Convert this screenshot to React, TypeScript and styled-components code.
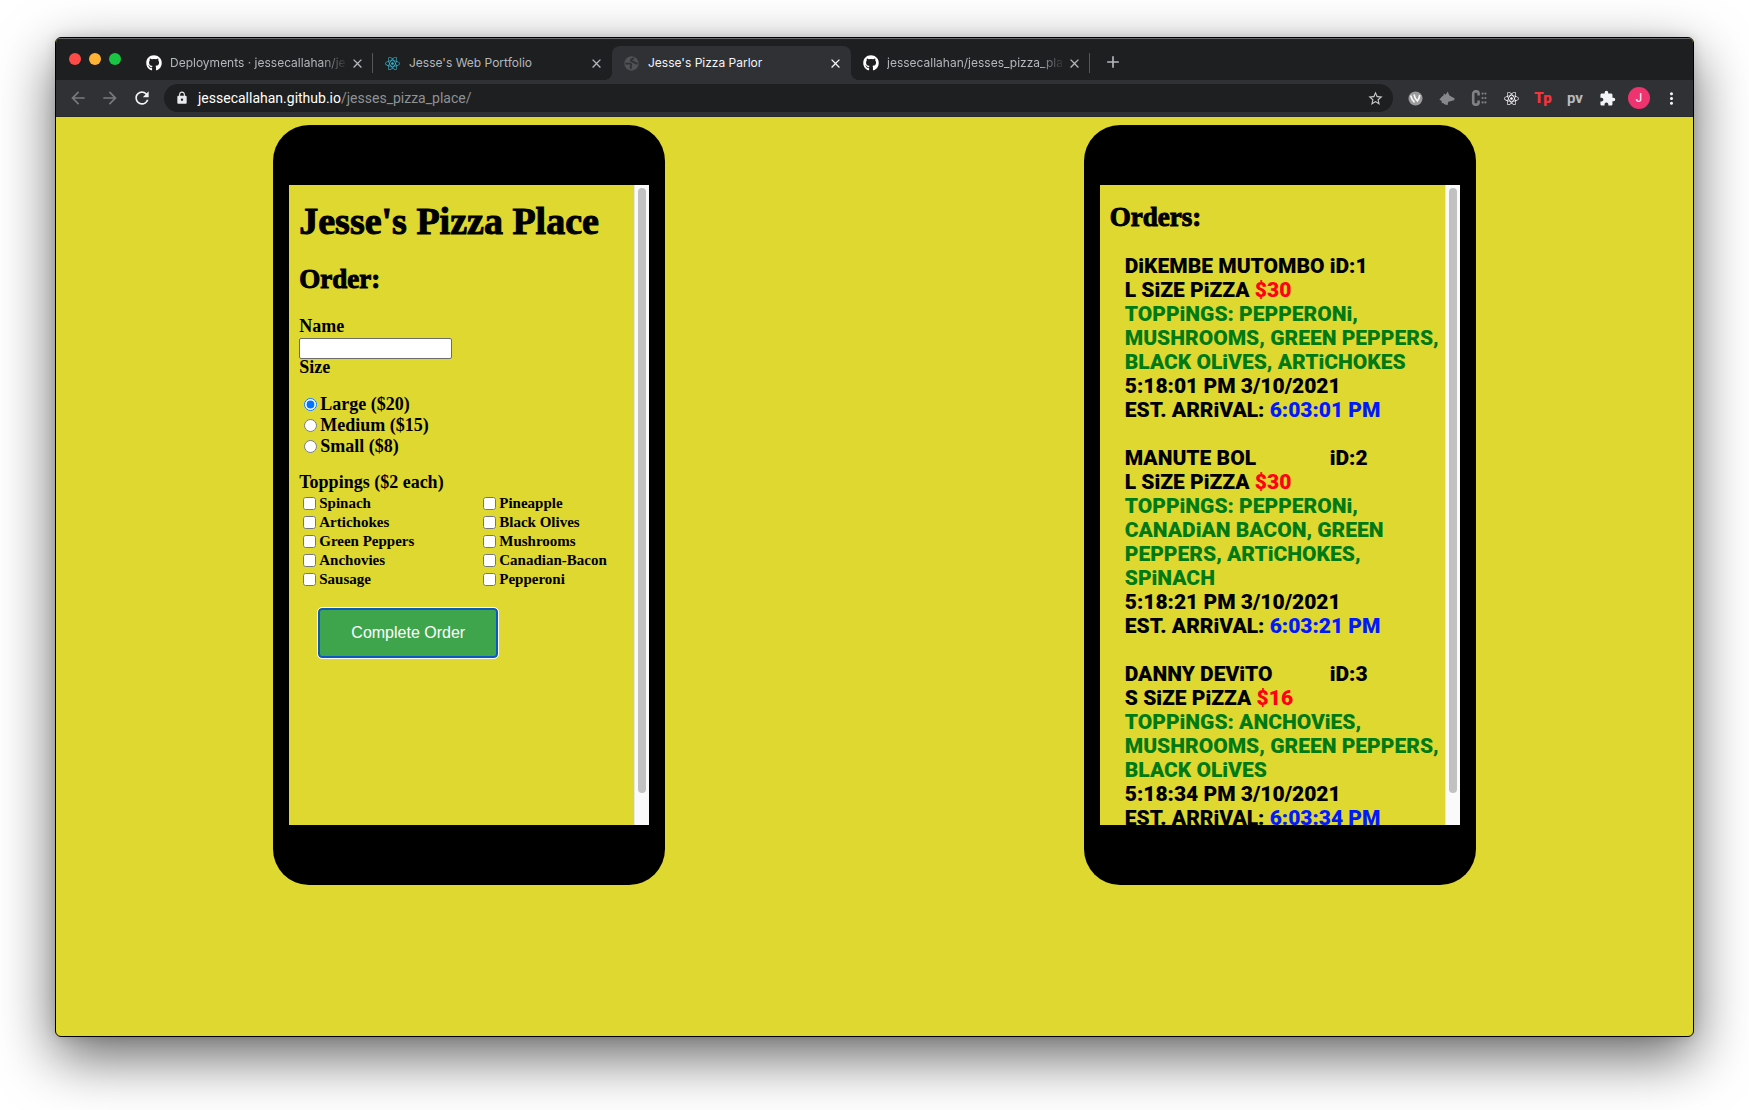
import React from "react";
import styled, { createGlobalStyle } from "styled-components";
import { FaGithub, FaReact } from "react-icons/fa";
import {
  MdAdd, MdArrowBack, MdArrowForward, MdClose, MdExtension, MdLock,
  MdMoreVert, MdRefresh, MdStarBorder,
} from "react-icons/md";

const mustard = "#ded830";
const display = `"Liberation Serif", "Times New Roman", serif`;
const ui = `Inter, Roboto, "Liberation Sans", sans-serif`;

const GlobalStyle = createGlobalStyle`
  *, *::before, *::after { box-sizing: border-box; }
  body { margin: 0; background: #fff; font-family: ${ui}; }
  #root { min-height: 100vh; display: flex; }
  button { font: inherit; }
`;

const Desktop = styled.div`
  flex: 1;
  min-height: 100vh;
  display: flex;
  padding: 37px 55px 73px;
  overflow: hidden;
`;

const BrowserWindow = styled.div`
  flex: 1;
  min-width: 0;
  display: flex;
  flex-direction: column;
  border: 1px solid #000;
  border-radius: 6px;
  overflow: hidden;
  background: ${mustard};
  box-shadow: 0 20px 56px rgba(0, 0, 0, 0.6), 0 0 12px rgba(0, 0, 0, 0.14);
`;

const TabStrip = styled.div`
  display: flex;
  height: 42px;
  padding-top: 7px;
  background: #1e1f21;
  border-top: 1px solid #6a6b6d;
`;

const WindowControls = styled.div`
  display: flex;
  gap: 8px;
  width: 78px;
  padding: 7px 0 0 13px;
`;

const Light = styled.button<{ $color: string }>`
  width: 12px;
  height: 12px;
  padding: 0;
  border: 0;
  border-radius: 50%;
  background: ${(p) => p.$color};
`;

const Tab = styled.div<{ $active?: boolean; $divided?: boolean }>`
  position: relative;
  display: flex;
  align-items: center;
  width: 239px;
  height: 34px;
  padding: 0 7px 0 12px;
  border-radius: 8px 8px 0 0;
  background: ${(p) => (p.$active ? "#303135" : "transparent")};
  color: ${(p) => (p.$active ? "#f4f5f6" : "#b4b7bb")};
  background-image: ${(p) => (p.$divided ? "linear-gradient(#55575a, #55575a)" : "none")};
  background-size: 1px 20px;
  background-position: right center;
  background-repeat: no-repeat;

  &::before,
  &::after {
    content: "";
    display: ${(p) => (p.$active ? "block" : "none")};
    position: absolute;
    bottom: 0;
    width: 8px;
    height: 8px;
  }
  &::before {
    right: 100%;
    background: radial-gradient(circle at 0 0, transparent 8px, #303135 8px);
  }
  &::after {
    left: 100%;
    background: radial-gradient(circle at 100% 0, transparent 8px, #303135 8px);
  }
`;

const Favicon = styled.span<{ $color: string }>`
  flex: none;
  display: flex;
  width: 24px;
  color: ${(p) => p.$color};
`;

const TabTitle = styled.span<{ $fade?: boolean }>`
  flex: 1;
  min-width: 0;
  overflow: hidden;
  white-space: nowrap;
  font-size: 12px;
  line-height: 16px;
  mask-image: ${(p) => (p.$fade ? "linear-gradient(90deg, #000 85%, transparent)" : "none")};
`;

const IconButton = styled.button<{ $size?: number; $color?: string }>`
  flex: none;
  display: flex;
  align-items: center;
  justify-content: center;
  width: ${(p) => p.$size ?? 32}px;
  height: ${(p) => p.$size ?? 32}px;
  padding: 0;
  border: 0;
  background: none;
  color: ${(p) => p.$color ?? "inherit"};
`;

const NewTabButton = styled(IconButton)`
  margin-left: 7px;
`;

const Toolbar = styled.div`
  display: flex;
  align-items: center;
  height: 37px;
  padding: 0 6px;
  background: #303135;
  border-bottom: 1px solid #292a2c;
`;

const AddressBar = styled.div`
  flex: 1;
  display: flex;
  align-items: center;
  height: 28px;
  margin: 0 6px;
  padding: 0 2px 0 11px;
  border-radius: 14px;
  background: #1e1f21;
  color: #e8eaed;
`;

const Url = styled.span`
  flex: 1;
  margin-left: 9px;
  font-family: Roboto, sans-serif;
  font-size: 14px;
  line-height: 20px;
  color: #fff;
`;

const UrlPath = styled.span`
  color: #8f9295;
`;

const Avatar = styled.button`
  width: 22px;
  height: 22px;
  margin: 0 5px;
  padding: 0;
  border: 0;
  border-radius: 50%;
  background: #ef336f;
  color: #fff;
  font-size: 12px;
  line-height: 22px;
`;

const ExtensionMark = styled.span<{ $weight: number }>`
  font-size: 15px;
  line-height: 20px;
  font-weight: ${(p) => p.$weight};
  font-family: Roboto, sans-serif;
`;

const Page = styled.main`
  flex: 1;
  display: flex;
  align-items: flex-start;
  padding: 8px;
`;

const Column = styled.div`
  flex: 1;
  display: flex;
  justify-content: center;
`;

const Phone = styled.section`
  width: 392px;
  padding: 60px 16px;
  border-radius: 36px;
  background: #000;
`;

const Screen = styled.div`
  display: flex;
  height: 640px;
  overflow: hidden;
  background: ${mustard};
`;

const ScreenContent = styled.div`
  flex: 1;
  min-width: 0;
  padding-left: 10px;
  font-family: ${display};
  font-weight: 700;
  color: #000;
`;

const Scrollbar = styled.div`
  width: 15px;
  padding: 3px;
  background: #fafafa;
  border-left: 1px solid #e6e6e6;
`;

const Thumb = styled.div`
  width: 8px;
  height: 95.5%;
  border-radius: 4px;
  background: #c1c1c1;
`;

const Title = styled.h1`
  margin: 16px 0 22px;
  font-size: 38px;
  line-height: 40px;
  -webkit-text-stroke: 1px currentColor;
`;

const Heading = styled.h2`
  margin: 16px 0 19px;
  font-size: 27px;
  line-height: 32px;
  -webkit-text-stroke: 1px currentColor;
`;

const FieldLabel = styled.label`
  display: block;
  font-size: 18px;
  line-height: 24px;
`;

const NameInput = styled.input`
  display: block;
  width: 153px;
  height: 21px;
  border: 1px solid #6c6c6c;
  border-radius: 2px;
  background: #fff;
`;

const Group = styled.fieldset<{ $top?: number }>`
  margin: ${(p) => p.$top ?? 0}px 0 0;
  padding: 0;
  border: 0;
  min-width: 0;
`;

const Legend = styled.legend<{ $gap: number }>`
  padding: 0;
  margin-bottom: ${(p) => p.$gap}px;
  font-size: 18px;
  line-height: 16px;
`;

const Choice = styled.label<{ $compact?: boolean }>`
  display: flex;
  align-items: center;
  font-size: ${(p) => (p.$compact ? 15 : 18)}px;
  line-height: ${(p) => (p.$compact ? 19 : 21)}px;
`;

const Radio = styled.input`
  width: 13px;
  height: 13px;
  margin: 0 3px 0 5px;
`;

const Checkbox = styled.input`
  width: 13px;
  height: 13px;
  margin: 0 3px 0 4px;
`;

const Toppings = styled.div`
  display: grid;
  grid-template-columns: 180px 1fr;
`;

const SubmitButton = styled.button`
  width: 180px;
  height: 50px;
  margin: 19px 0 0 19px;
  border: 2px solid #0b57c4;
  border-radius: 4px;
  outline: 1px solid #fff;
  background: #3fa54c;
  color: #fff;
  font-family: "Liberation Sans", Arial, sans-serif;
  font-size: 16px;
  font-weight: 400;
`;

const OrderList = styled.ul`
  margin: 0;
  padding: 2px 0 0 15px;
  list-style: none;
  font-family: Roboto, "Liberation Sans", sans-serif;
  font-weight: 900;
  font-size: 21px;
  line-height: 24px;
  white-space: nowrap;
`;

const OrderItem = styled.li`
  margin-bottom: 24px;
`;

const Customer = styled.div`
  display: grid;
  grid-template-columns: 205px 1fr;
`;

const Line = styled.div<{ $color?: string }>`
  color: ${(p) => p.$color ?? "inherit"};
`;

const Mark = styled.span<{ $color: string }>`
  color: ${(p) => p.$color};
`;

const tabs = [
  { title: "Deployments · jessecallahan/je", icon: <FaGithub size={16} />, color: "#fff", fade: true, divided: true },
  { title: "Jesse's Web Portfolio", icon: <FaReact size={15} />, color: "#35b4cf" },
  { title: "Jesse's Pizza Parlor", icon: <GlobeIcon />, color: "#505256", active: true },
  { title: "jessecallahan/jesses_pizza_pla", icon: <FaGithub size={16} />, color: "#fff", fade: true, divided: true },
];

const sizes = ["Large ($20)", "Medium ($15)", "Small ($8)"];

const toppings = [
  "Spinach", "Pineapple", "Artichokes", "Black Olives", "Green Peppers",
  "Mushrooms", "Anchovies", "Canadian-Bacon", "Sausage", "Pepperoni",
];

const orders = [
  {
    id: 1, name: "DiKEMBE MUTOMBO", size: "L", price: "$30",
    toppings: ["TOPPiNGS: PEPPERONi,", "MUSHROOMS, GREEN PEPPERS,", "BLACK OLiVES, ARTiCHOKES"],
    placed: "5:18:01 PM 3/10/2021", arrival: "6:03:01 PM",
  },
  {
    id: 2, name: "MANUTE BOL", size: "L", price: "$30",
    toppings: ["TOPPiNGS: PEPPERONi,", "CANADiAN BACON, GREEN", "PEPPERS, ARTiCHOKES,", "SPiNACH"],
    placed: "5:18:21 PM 3/10/2021", arrival: "6:03:21 PM",
  },
  {
    id: 3, name: "DANNY DEViTO", size: "S", price: "$16",
    toppings: ["TOPPiNGS: ANCHOViES,", "MUSHROOMS, GREEN PEPPERS,", "BLACK OLiVES"],
    placed: "5:18:34 PM 3/10/2021", arrival: "6:03:34 PM",
  },
];

function GlobeIcon() {
  return (
    <svg width="15" height="15" viewBox="0 0 15 15">
      <circle cx="7.5" cy="7.5" r="7.2" fill="currentColor" />
      <path d="M1.2 7.6h4.6c1.6 0 1.6 1.6 1.2 2.4-.6 1 .2 1.6-.4 2.8" fill="none" stroke="#303135" strokeWidth="1.9" />
      <path d="M9.6 1.6c-.4 1.8-2.8 1.2-2.8 2.9 0 1.5 2.6.6 3.4 1.9.7 1 2 1.2 3.6.9" fill="none" stroke="#303135" strokeWidth="1.9" />
    </svg>
  );
}

function StripedBall() {
  return (
    <svg width="15" height="15" viewBox="0 0 15 15">
      <circle cx="7.5" cy="7.5" r="7" fill="#9a9b9d" />
      <path d="M2.6 4.5c.8 3 2 5 4 6.800M6 3.500c.6 3 1.600 4.800 3.400 6.500 1.400-1.600 2-3.400 2.400-6" fill="none" stroke="#f4f4f4" strokeWidth="1.7" />
    </svg>
  );
}

function WolfHead() {
  return (
    <svg width="16" height="16" viewBox="0 0 16 16">
      <path d="M.4 9.4 3 6.5 4.500 5.600 4.800 3.400 6.600 4.800 8.800 1.400l1.400 3.800 2 1.300 3.600 1.900-.8 1.800-3.600 1-2 .6-.6 1.600.4 1.300H6.200l-1.800-1.400-1.800-.2.2-1.900z" fill="#87888a" />
    </svg>
  );
}

function ColumnMark() {
  return (
    <svg width="16" height="16" viewBox="0 0 16 16">
      <path d="M7.600 5.400V3.500A2.200 2.200 0 0 0 5.400 1.400H4.600A2.400 2.400 0 0 0 2.200 3.800v8.400a2.400 2.400 0 0 0 2.400 2.400h.8A2.200 2.200 0 0 0 7.600 12.500V10.600" fill="none" stroke="#808183" strokeWidth="2.6" />
      <g fill="#808183">
        <circle cx="11.6" cy="3.6" r="1.1" /><circle cx="14.4" cy="3.6" r="1.1" />
        <circle cx="11.6" cy="8" r="1.1" /><circle cx="14.4" cy="8" r="1.1" />
        <circle cx="11.6" cy="12.4" r="1.1" /><circle cx="14.4" cy="12.4" r="1.1" />
      </g>
    </svg>
  );
}

function Device({ children }: { children: React.ReactNode }) {
  return (
    <Column>
      <Phone>
        <Screen>
          <ScreenContent>{children}</ScreenContent>
          <Scrollbar><Thumb /></Scrollbar>
        </Screen>
      </Phone>
    </Column>
  );
}

export default function App() {
  return (
    <>
      <GlobalStyle />
      <Desktop>
        <BrowserWindow>
          <TabStrip>
            <WindowControls>
              <Light $color="#ff4b48" aria-label="Close window" />
              <Light $color="#ffb334" aria-label="Minimize window" />
              <Light $color="#1bc544" aria-label="Zoom window" />
            </WindowControls>
            {tabs.map((tab) => (
              <Tab key={tab.title} $active={tab.active} $divided={tab.divided}>
                <Favicon $color={tab.color}>{tab.icon}</Favicon>
                <TabTitle $fade={tab.fade}>{tab.title}</TabTitle>
                <IconButton $size={18} aria-label="Close tab"><MdClose size={15} /></IconButton>
              </Tab>
            ))}
            <NewTabButton $color="#b4b7bb" aria-label="New tab"><MdAdd size={20} /></NewTabButton>
          </TabStrip>

          <Toolbar>
            <IconButton $color="#77797c" aria-label="Back"><MdArrowBack size={20} /></IconButton>
            <IconButton $color="#77797c" aria-label="Forward"><MdArrowForward size={20} /></IconButton>
            <IconButton $color="#f1f3f4" aria-label="Reload"><MdRefresh size={20} /></IconButton>
            <AddressBar>
              <MdLock size={14} />
              <Url>jessecallahan.github.io<UrlPath>/jesses_pizza_place/</UrlPath></Url>
              <IconButton $color="#c4c6c9" aria-label="Bookmark"><MdStarBorder size={17} /></IconButton>
            </AddressBar>
            <IconButton aria-label="Striped ball extension"><StripedBall /></IconButton>
            <IconButton aria-label="Wolf extension"><WolfHead /></IconButton>
            <IconButton aria-label="Column extension"><ColumnMark /></IconButton>
            <IconButton $color="#fff" aria-label="React tools"><FaReact size={15} /></IconButton>
            <IconButton $color="#f5333b"><ExtensionMark $weight={900}>Tp</ExtensionMark></IconButton>
            <IconButton $color="#b9babd"><ExtensionMark $weight={700}>pv</ExtensionMark></IconButton>
            <IconButton $color="#f1f3f4" aria-label="Extensions"><MdExtension size={17} /></IconButton>
            <Avatar>J</Avatar>
            <IconButton $color="#f1f3f4" aria-label="Menu"><MdMoreVert size={19} /></IconButton>
          </Toolbar>

          <Page>
            <Device>
              <Title>Jesse's Pizza Place</Title>
              <Heading>Order:</Heading>
              <FieldLabel htmlFor="name">Name</FieldLabel>
              <NameInput id="name" type="text" />
              <Group>
                <Legend $gap={19}>Size</Legend>
                {sizes.map((size, i) => (
                  <Choice key={size}>
                    <Radio type="radio" name="size" defaultChecked={i === 0} />
                    {size}
                  </Choice>
                ))}
              </Group>
              <Group $top={17}>
                <Legend $gap={4}>Toppings ($2 each)</Legend>
                <Toppings>
                  {toppings.map((topping) => (
                    <Choice key={topping} $compact>
                      <Checkbox type="checkbox" />
                      {topping}
                    </Choice>
                  ))}
                </Toppings>
              </Group>
              <SubmitButton type="button">Complete Order</SubmitButton>
            </Device>

            <Device>
              <Heading>Orders:</Heading>
              <OrderList>
                {orders.map((order) => (
                  <OrderItem key={order.id}>
                    <Customer>
                      <span>{order.name}</span>
                      <span>iD:{order.id}</span>
                    </Customer>
                    <Line>{order.size} SiZE PiZZA <Mark $color="#ff0015">{order.price}</Mark></Line>
                    {order.toppings.map((line) => (
                      <Line key={line} $color="#007a15">{line}</Line>
                    ))}
                    <Line>{order.placed}</Line>
                    <Line>EST. ARRiVAL: <Mark $color="#0019ff">{order.arrival}</Mark></Line>
                  </OrderItem>
                ))}
              </OrderList>
            </Device>
          </Page>
        </BrowserWindow>
      </Desktop>
    </>
  );
}
